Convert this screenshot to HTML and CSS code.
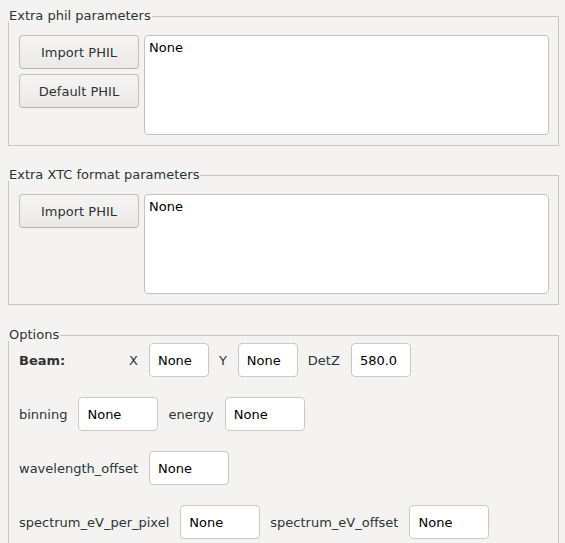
FILE: index.html
```html
<!DOCTYPE html>
<html lang="en">
<head>
    <meta charset="UTF-8">
    <title>Options</title>
    <link rel="stylesheet" href="styles.css">
</head>
<body>

<div class="page">

    <!-- Extra phil -->
    <div class="frame">
        <div class="frame-title">Extra phil parameters</div>
        <div class="frame-body">
            <div class="phil-row">
                <div class="btn-col">
                    <button class="btn">Import PHIL</button>
                    <button class="btn">Default PHIL</button>
                </div>
                <textarea class="phil-text">None</textarea>
            </div>
        </div>
    </div>

    <!-- Extra XTC -->
    <div class="frame">
        <div class="frame-title">Extra XTC format parameters</div>
        <div class="frame-body">
            <div class="phil-row">
                <div class="btn-col">
                    <button class="btn">Import PHIL</button>
                </div>
                <textarea class="phil-text">None</textarea>
            </div>
        </div>
    </div>

    <!-- Options -->
    <div class="frame options">
        <div class="frame-title">Options</div>
        <div class="frame-body opt-body">
            <div class="opt-row">
                <span class="beam-label">Beam:</span>
                <span class="lbl">X</span>
                <input class="field small" type="text" value="None">
                <span class="lbl">Y</span>
                <input class="field small" type="text" value="None">
                <span class="lbl">DetZ</span>
                <input class="field small" type="text" value="580.0">
            </div>
            <div class="opt-row">
                <span class="lbl">binning</span>
                <input class="field" type="text" value="None">
                <span class="lbl">energy</span>
                <input class="field" type="text" value="None">
            </div>
            <div class="opt-row">
                <span class="lbl">wavelength_offset</span>
                <input class="field" type="text" value="None">
            </div>
            <div class="opt-row">
                <span class="lbl">spectrum_eV_per_pixel</span>
                <input class="field" type="text" value="None">
                <span class="lbl">spectrum_eV_offset</span>
                <input class="field" type="text" value="None">
            </div>
        </div>
    </div>

</div>

</body>
</html>
```

FILE: styles.css
```css
/* Grundlayout */
body {
    margin: 0;
    background-color: #f4f3f1;
    color: #2e3436;
    font-family: 'DejaVu Sans', sans-serif;
    font-size: 13px;
}

.page {
    padding: 10px 6px 0 8px;
}

/* Rahmen mit Titel */
.frame + .frame {
    margin-top: 23px;
}

.options {
    margin-top: 24px !important;
}

.frame-title {
    display: flex;
    height: 12px;
    line-height: 12px;
    padding-left: 1px;
    white-space: nowrap;
}

.frame-title::after {
    content: "";
    flex: 1;
    margin-top: 6px;
    margin-left: 1px;
    border-top: 1px solid #cac6c1;
    border-right: 1px solid #cac6c1;
}

.frame-body {
    border: 1px solid #cac6c1;
    border-top: none;
    padding: 13px 9px 10px 10px;
}

.phil-row {
    display: flex;
    gap: 5px;
}

.btn-col {
    display: flex;
    flex-direction: column;
    gap: 5px;
}

.btn {
    width: 120px;
    height: 34px;
    padding-bottom: 1px;
    font-family: inherit;
    font-size: 13px;
    color: #2e3436;
    background: linear-gradient(#f6f5f4, #ebe9e6);
    border: 1px solid #c2beb9;
    border-bottom-color: #b8b3ad;
    border-radius: 4px;
}

.phil-text {
    flex: 1;
    height: 100px;
    box-sizing: border-box;
    margin: 0;
    padding: 4px 4px;
    resize: none;
    font-family: inherit;
    font-size: 13px;
    line-height: 16px;
    color: #000;
    background: #fff;
    border: 1px solid #c6c2bd;
    border-radius: 4px;
    outline: none;
}

/* Optionen */
.opt-body {
    padding: 2px 9px 0 10px;
    height: 220px;
}

.opt-row {
    display: flex;
    align-items: center;
    gap: 10px;
    height: 34px;
    margin-bottom: 20px;
}

.beam-label {
    width: 100px;
    font-weight: bold;
}

.lbl {
    white-space: nowrap;
}

.field {
    width: 80px;
    height: 34px;
    box-sizing: border-box;
    margin: 0 0 0 1px;
    padding: 0 8px;
    font-family: inherit;
    font-size: 13px;
    color: #000;
    background: #fff;
    border: 1px solid #cdc8c3;
    border-radius: 4px;
    outline: none;
}

.field.small {
    width: 60px;
}
```
